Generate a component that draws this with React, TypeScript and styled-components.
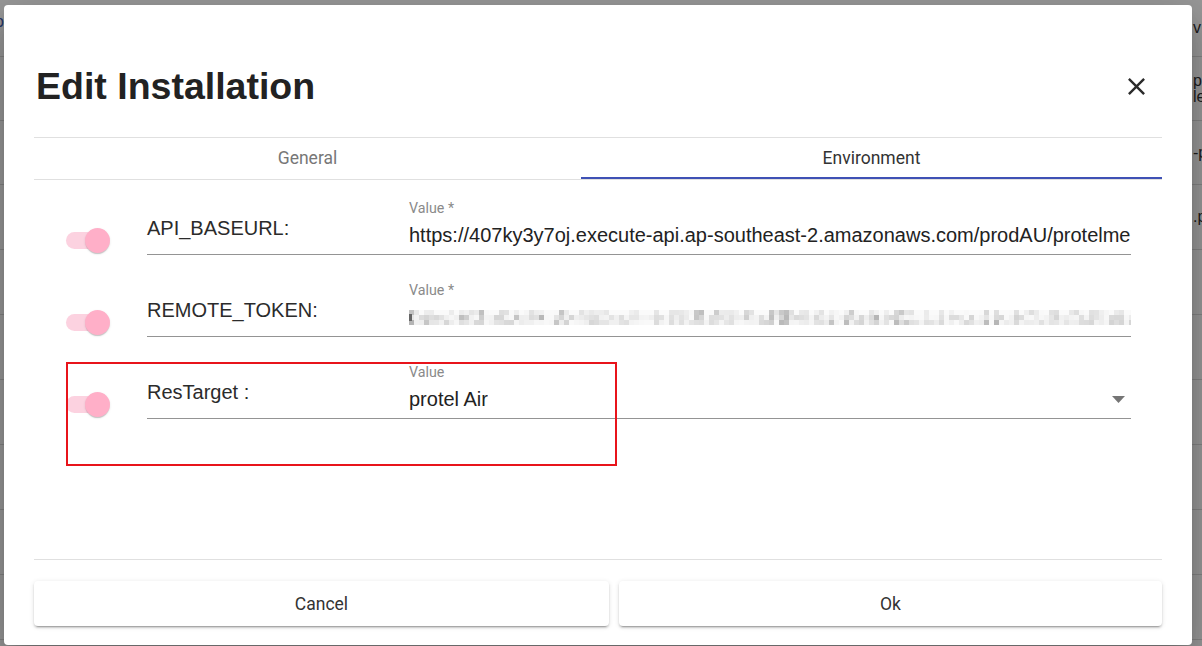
import React, { useMemo, useState } from 'react'
import styled, { createGlobalStyle } from 'styled-components'

const GlobalStyle = createGlobalStyle`
    html, body {
        margin: 0;
        padding: 0;
        background: #fff;
    }
    * {
        box-sizing: border-box;
    }
`

type EnvVar = {
    name: string
    value: string
    required: boolean
    kind: 'text' | 'secret' | 'select'
}

const vars: EnvVar[] = [
    { name: 'API_BASEURL:', value: 'https://407ky3y7oj.execute-api.ap-southeast-2.amazonaws.com/prodAU/protelme', required: true, kind: 'text' },
    { name: 'REMOTE_TOKEN:', value: '', required: true, kind: 'secret' },
    { name: 'ResTarget :', value: 'protel Air', required: false, kind: 'select' },
]

// rows of the page behind the modal, only the edges show
const behindRows = [
    { h: 57, left: 'o', right: ['v'] },
    { h: 64, left: '', right: ['pp', 'le'] },
    { h: 64, left: '', right: ['-p'] },
    { h: 65, left: '', right: ['.p'] },
    { h: 65, left: '', right: [] },
    { h: 65, left: '', right: [] },
    { h: 65, left: '', right: [] },
    { h: 65, left: '', right: [] },
    { h: 65, left: '', right: [] },
    { h: 65, left: '', right: [] },
]

function BlurredToken() {
    // pixelated stand-in for the masked token
    const cells = useMemo(() => {
        let seed = 29
        const rnd = () => {
            seed = (seed * 1103515245 + 12345) % 2147483648
            return seed / 2147483648
        }
        const out: { x: number; y: number; c: string }[] = []
        for (let col = 0; col < 145; col++) {
            const base = rnd()
            for (let row = 0; row < 3; row++) {
                const r = (base + rnd()) / 2
                let v = 236 + Math.floor(rnd() * 14)
                if (r > 0.5) v = 212 + Math.floor(rnd() * 20)
                if (r > 0.8) v = 180 + Math.floor(rnd() * 28)
                if (row === 0) v = Math.min(250, v + 10)
                out.push({ x: col * 5, y: row * 5, c: `rgb(${v},${v},${v})` })
            }
        }
        return out
    }, [])
    return (
        <svg width="722" height="15" viewBox="0 0 722 15">
            {cells.map((p, i) => <rect key={i} x={p.x} y={p.y} width="5" height="5" fill={p.c} />)}
            <rect x="0" y="4" width="3" height="7" fill="#666" />
        </svg>
    )
}

function App() {
    const [tab, setTab] = useState(1)
    const [enabled, setEnabled] = useState([true, true, true])

    return (
        <Page>
            <GlobalStyle />
            <Behind>
                {behindRows.map((r, i) => (
                    <BehindRow key={i} $h={r.h}>
                        <BehindLeft>{r.left}</BehindLeft>
                        <BehindRight>
                            {r.right.map(t => <div key={t}>{t}</div>)}
                        </BehindRight>
                    </BehindRow>
                ))}
            </Behind>
            <Backdrop />
            <Dialog>
                <Header>
                    <Title>Edit Installation</Title>
                    <CloseButton aria-label="close">
                        <svg width="29" height="29" viewBox="0 0 24 24">
                            <path fill="#2b2b2b" d="M19 6.41L17.59 5 12 10.59 6.41 5 5 6.41 10.59 12 5 17.59 6.41 19 12 13.41 17.59 19 19 17.59 13.41 12z" />
                        </svg>
                    </CloseButton>
                </Header>
                <Tabs>
                    {['General', 'Environment'].map((t, i) => (
                        <Tab key={t} $active={tab === i} onClick={() => setTab(i)}>{t}</Tab>
                    ))}
                </Tabs>
                <Body>
                    {vars.map((v, i) => (
                        <Row key={v.name}>
                            <Switch onClick={() => setEnabled(e => e.map((x, j) => j === i ? !x : x))}>
                                <Track />
                                <Thumb $on={enabled[i]} />
                            </Switch>
                            <Field>
                                <VarName>{v.name}</VarName>
                                <ValueCol>
                                    <Caption>{v.required ? 'Value *' : 'Value'}</Caption>
                                    <Input $select={v.kind === 'select'}>
                                        {v.kind === 'secret' ? <BlurredToken /> : <InputText>{v.value}</InputText>}
                                        {v.kind === 'select' && (
                                            <svg width="13" height="7" viewBox="0 0 13 7">
                                                <path d="M0 0h13L6.5 7z" fill="#757575" />
                                            </svg>
                                        )}
                                    </Input>
                                </ValueCol>
                            </Field>
                            {v.kind === 'select' && <Highlight />}
                        </Row>
                    ))}
                </Body>
                <Footer>
                    <Button>Cancel</Button>
                    <Button>Ok</Button>
                </Footer>
            </Dialog>
        </Page>
    )
}

const Page = styled.div`
    position: relative;
    width: 1202px;
    height: 646px;
    overflow: hidden;
    background: #fff;
    font-family: Roboto, "Liberation Sans", Arial, sans-serif;
`

const Behind = styled.div`
    display: flex;
    flex-direction: column;
`

const BehindRow = styled.div<{ $h: number }>`
    height: ${p => p.$h}px;
    flex-shrink: 0;
    display: grid;
    grid-template-columns: 1193px 200px;
    align-items: center;
    border-bottom: 1px solid #dcdcdc;
    font-family: "Liberation Sans", Arial, sans-serif;
    font-size: 16px;
    line-height: 16px;
    color: #333;
`

const BehindLeft = styled.div`
    margin-left: -5px;
    color: #3b5bb0;
    align-self: start;
    padding-top: 14px;
`

const BehindRight = styled.div`
    white-space: nowrap;
`

const Backdrop = styled.div`
    position: absolute;
    inset: 0;
    background: rgba(0, 0, 0, 0.4);
`

const Dialog = styled.div`
    position: absolute;
    left: 4px;
    top: 5px;
    width: 1188px;
    height: 640px;
    background: #fff;
    border-radius: 4px;
    box-shadow: 0 11px 15px -7px rgba(0,0,0,0.2), 0 24px 38px 3px rgba(0,0,0,0.14), 0 9px 46px 8px rgba(0,0,0,0.12);
    display: flex;
    flex-direction: column;
    padding: 0 30px;
`

const Header = styled.div`
    display: flex;
    align-items: center;
    justify-content: space-between;
    padding: 57px 11px 27px 2px;
    border-bottom: 1px solid #e0e0e0;
`

const Title = styled.h2`
    margin: 0;
    font-family: "Liberation Sans", Arial, sans-serif;
    font-size: 37.5px;
    line-height: 48px;
    font-weight: 700;
    color: #222;
`

const CloseButton = styled.button`
    border: none;
    background: none;
    padding: 0;
    width: 29px;
    height: 29px;
    display: flex;
    cursor: pointer;
`

const Tabs = styled.div`
    display: grid;
    grid-template-columns: 547px 1fr;
    border-bottom: 1px solid #e0e0e0;
`

const Tab = styled.button<{ $active: boolean }>`
    height: 41px;
    border: none;
    background: none;
    border-bottom: 2px solid ${p => p.$active ? '#3f51b5' : 'transparent'};
    font-family: Roboto, "Liberation Sans", Arial, sans-serif;
    font-size: 17.5px;
    color: ${p => p.$active ? '#333' : '#777'};
    padding: 0;
    cursor: pointer;
`

const Body = styled.div`
    flex: 1;
    display: flex;
    flex-direction: column;
    gap: 28px;
    padding: 21px 31px 0 32px;
`

const Row = styled.div`
    position: relative;
    display: flex;
    align-items: flex-end;
`

const Switch = styled.div`
    position: relative;
    width: 44px;
    height: 25px;
    margin-bottom: 2px;
    flex-shrink: 0;
    cursor: pointer;
`

const Track = styled.div`
    position: absolute;
    left: 0;
    top: 4px;
    width: 41px;
    height: 17px;
    border-radius: 9px;
    background: #fcd2e0;
`

const Thumb = styled.div<{ $on: boolean }>`
    position: absolute;
    top: 0;
    left: ${p => p.$on ? 19 : 0}px;
    width: 25px;
    height: 25px;
    border-radius: 50%;
    background: ${p => p.$on ? '#ffafc8' : '#fafafa'};
    box-shadow: 0 2px 1px -1px rgba(0,0,0,0.12), 0 1px 1px 0 rgba(0,0,0,0.08), 0 1px 3px 0 rgba(0,0,0,0.08);
`

const Field = styled.div`
    flex: 1;
    min-width: 0;
    margin-left: 37px;
    display: flex;
    border-bottom: 1px solid #949494;
`

const VarName = styled.div`
    width: 262px;
    flex-shrink: 0;
    align-self: center;
    font-family: "Liberation Sans", Arial, sans-serif;
    font-size: 20px;
    line-height: 24px;
    color: #2b2b2b;
`

const ValueCol = styled.div`
    flex: 1;
    min-width: 0;
    display: flex;
    flex-direction: column;
`

const Caption = styled.div`
    font-size: 14.25px;
    line-height: 15px;
    color: #8a8a8a;
`

const Input = styled.div<{ $select: boolean }>`
    display: flex;
    align-items: center;
    justify-content: space-between;
    height: 38px;
    padding: 7px ${p => p.$select ? 6 : 0}px 7px 0;
    overflow: hidden;
`

const InputText = styled.span`
    font-family: "Liberation Sans", Arial, sans-serif;
    font-size: 20px;
    line-height: 24px;
    color: #222;
    white-space: nowrap;
    overflow: hidden;
`

const Highlight = styled.div`
    position: absolute;
    left: 0;
    top: -3px;
    width: 551px;
    height: 104px;
    border: 2px solid #e8141b;
    pointer-events: none;
`

const Footer = styled.div`
    display: grid;
    grid-template-columns: 575fr 543fr;
    gap: 10px;
    border-top: 1px solid #e0e0e0;
    padding: 21px 0 19px;
`

const Button = styled.button`
    height: 45px;
    border: none;
    border-radius: 4px;
    background: #fff;
    font-family: Roboto, "Liberation Sans", Arial, sans-serif;
    font-size: 17.5px;
    color: #333;
    cursor: pointer;
    box-shadow: 0 3px 1px -2px rgba(0,0,0,0.2), 0 2px 2px 0 rgba(0,0,0,0.14), 0 1px 5px 0 rgba(0,0,0,0.12);
`

export default App
